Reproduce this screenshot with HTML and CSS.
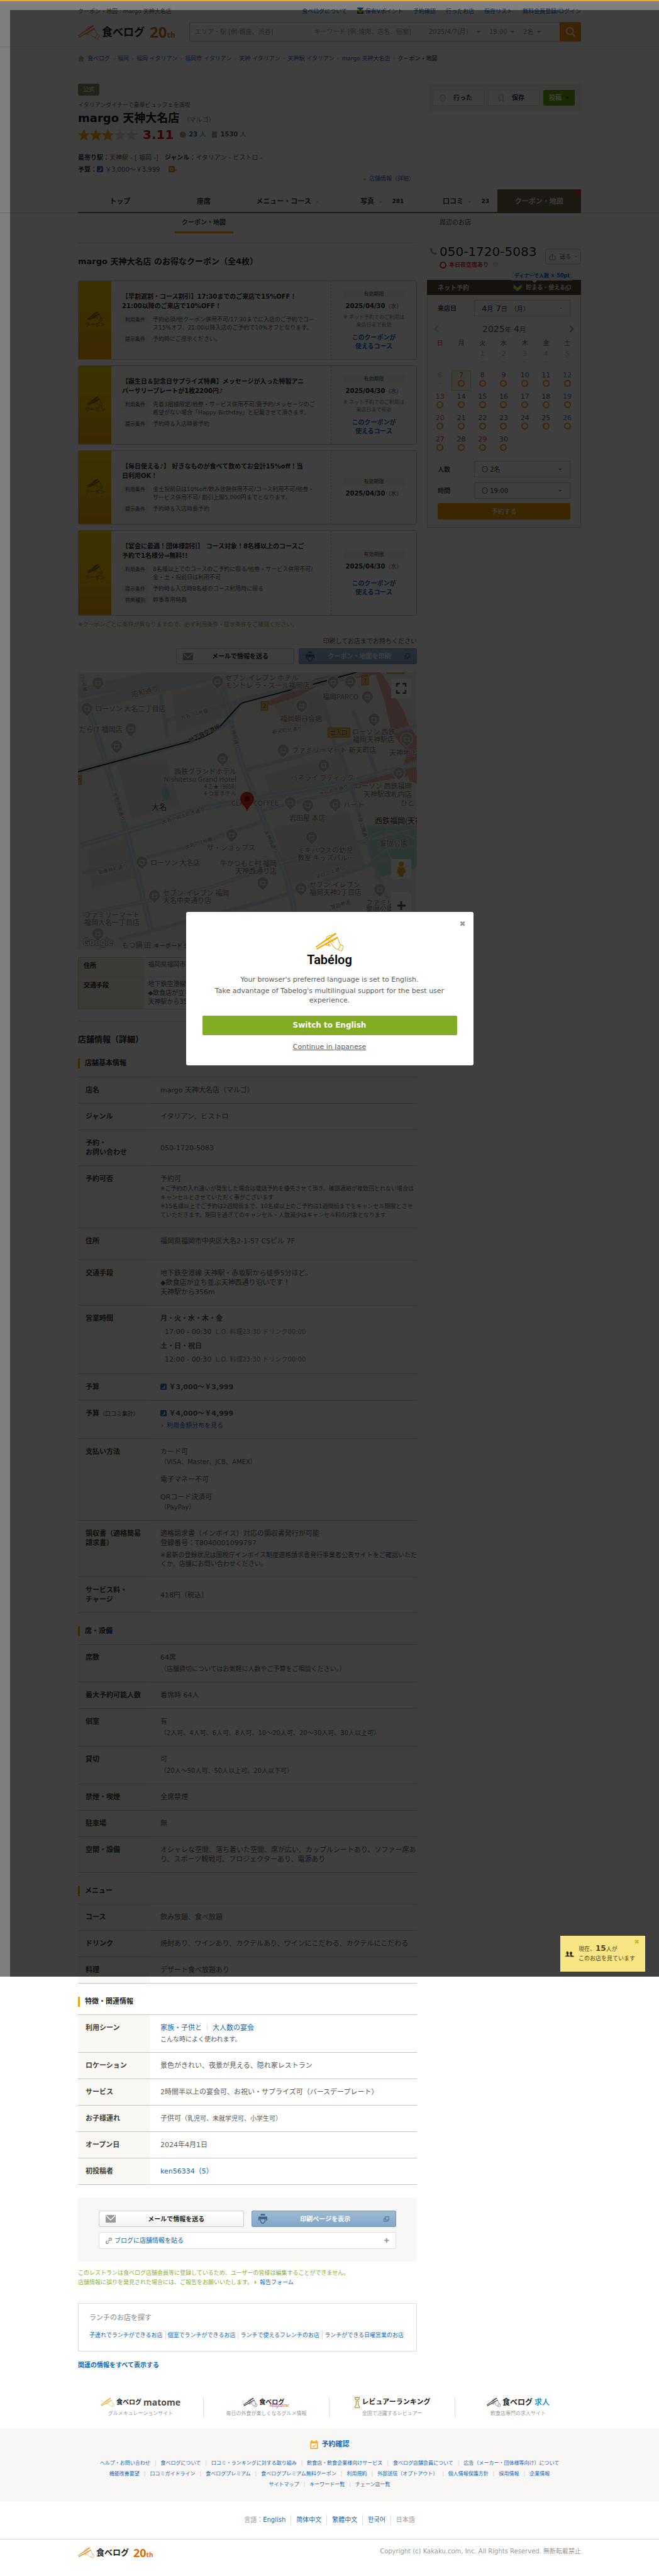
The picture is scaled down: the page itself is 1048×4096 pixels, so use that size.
FILE: index.html
```html
<!DOCTYPE html>
<html lang="ja">
<head>
<meta charset="utf-8">
<meta name="viewport" content="width=device-width, initial-scale=1">
<title>クーポン・地図 : margo 天神大名店 - 食べログ</title>
<link rel="stylesheet" href="styles.css">
</head>
<body>
<svg class="sprite" aria-hidden="true">
  <symbol id="hand" viewBox="0 0 56 38">
    <g fill="none" stroke="currentColor" stroke-width="1.3" stroke-linejoin="round" stroke-linecap="round">
      <path d="M21 13c1-4 5-8 10-8l5-1M43 9c3 5 4 10 7 15l5 2c1 3-1 8-3 11-2 0-4-1-7-3-5-2-9-4-11-9-3-5-5-8-9-11"/>
      <path d="M50 24c-1 4-2 7-5 10M25 12c3-1 5 0 7 3l4 5M24 20l-3 5c2 2 5 0 6-3M28 23l-2 3c1 2 4 0 4-1"/>
    </g>
    <path d="M0 28 40 0l2 3L1 30zM1 32l43-24 1 3L3 34z" fill="currentColor"/>
  </symbol>
  <symbol id="mail" viewBox="0 0 16 12"><path fill="#9a9a9a" d="M0 0h16v12H0z"/><path d="m1 1 7 7 7-7" fill="none" stroke="#fff" stroke-width="1.4"/></symbol>
  <symbol id="print" viewBox="0 0 16 18"><path fill="#3d6286" d="M4 0h8v3H4zM0 5h16v7h-2V9H2v3H0z"/><path fill="none" stroke="#3d6286" stroke-width="1.5" d="M4 9h8v5l-3 3H6l-2-3z"/></symbol>
  <symbol id="popup" viewBox="0 0 12 12"><path fill="none" stroke="currentColor" stroke-width="1.4" d="M4 1h7v7H4zM4 4H1v7h7V8"/></symbol>
  <symbol id="vpoint" viewBox="0 0 14 14"><path fill="#0b62a8" d="M0 0h14v14H0z"/><path fill="#f2e300" d="M0 1v6l7 6 7-6V1L7 7z"/></symbol>
  <symbol id="moon" viewBox="0 0 12 12"><rect width="12" height="12" rx="2" fill="#2a72ac"/><path fill="#fff" d="M7 2c3 2 3 7-2 8-1 0-2 0-3-1 4 0 6-3 5-7"/></symbol>
  <symbol id="sun" viewBox="0 0 12 12"><rect width="12" height="12" rx="2" fill="#d98a2b"/><circle cx="6" cy="6" r="2.5" fill="none" stroke="#fff" stroke-width="1.4"/></symbol>
  <symbol id="star" viewBox="0 0 20 20"><path d="m10 0 3 7 7 .6-5.300 4.600L16.300 20 10 15.600 3.700 20l1.600-7.800L0 7.600 7 7z" fill="currentColor"/></symbol>
  <symbol id="pin" viewBox="-30 -30 60 70"><path d="M0 36C-3 24-26 20-26-2a26 26 0 0 1 52 0C26 20 3 24 0 36" fill="#b4b4b0" stroke="#f4f2ee" stroke-width="4"/><path d="M-9-8H9V8H-9z" fill="none" stroke="#eee" stroke-width="4"/></symbol>
</svg>

<header class="site-head">
  <div class="wrap utility">
    <p>クーポン・地図 : margo 天神大名店</p>
    <nav aria-label="ユーティリティ">
      <a href="#">食べログについて</a>
      <a href="#"><svg class="ico12"><use href="#vpoint"/></svg> 保有Vポイント</a>
      <a href="#">予約確認</a>
      <a href="#">行ったお店</a>
      <a href="#">保存リスト</a>
      <a href="#">無料会員登録/ログイン</a>
    </nav>
  </div>
  <div class="wrap masthead">
    <a class="logo" href="#"><svg class="logo-mark"><use href="#hand"/></svg><span class="logo-name">食べログ</span><span class="logo-20">20<small>th</small></span></a>
    <form class="search">
      <input class="area" type="text" aria-label="エリア・駅" placeholder="エリア・駅 [例:銀座、渋谷]">
      <input class="word" type="text" aria-label="キーワード" placeholder="キーワード [例:焼肉、店名、個室]">
      <span class="pick"><select aria-label="日付" class="w-date"><option>2025/4/7(月)</option></select></span>
      <span class="pick"><select aria-label="時間" class="w-time"><option>19:00</option></select></span>
      <span class="pick"><select aria-label="人数" class="w-num"><option>2名</option></select></span>
      <button type="submit" aria-label="検索"><svg viewBox="0 0 20 20"><circle cx="9" cy="8" r="6"/><path d="m13 12 5 6"/></svg></button>
    </form>
  </div>
</header>

<nav class="wrap crumbs" aria-label="パンくず">
  <svg viewBox="0 0 12 12"><path d="m6 0 6 6h-2v6H7V8H5v4H2V6H0z"/></svg>
  <a href="#">食べログ</a><i>›</i><a href="#">福岡</a><i>›</i><a href="#">福岡 イタリアン</a><i>›</i><a href="#">福岡市 イタリアン</a><i>›</i><a href="#">天神 イタリアン</a><i>›</i><a href="#">天神駅 イタリアン</a><i>›</i><a href="#">margo 天神大名店</a><i>›</i><b>クーポン・地図</b>
</nav>

<div class="wrap shop">
  <div class="shop-id">
    <span class="official">公式</span>
    <p class="catch">イタリアンダイナーで豪華ビュッフェを満喫</p>
    <h1>margo 天神大名店 <small>（マルゴ）</small></h1>
    <div class="score">
      <svg class="on"><use href="#star"/></svg><svg class="on"><use href="#star"/></svg><svg class="on"><use href="#star"/></svg><svg class="off"><use href="#star"/></svg><svg class="off"><use href="#star"/></svg>
      <strong>3.11</strong>
      <span class="bubble"></span><a href="#"><b>23</b> 人</a><span class="mark"></span><span><b>1530</b> 人</span>
    </div>
    <p class="facts gap-l"><b>最寄り駅：</b>天神駅 - [ 福岡 -]　<b>ジャンル：</b>イタリアン - ビストロ -</p>
    <p class="facts gap-s"><b>予算：</b><svg class="ico12"><use href="#moon"/></svg> ￥3,000～￥3,999 　<svg class="ico12"><use href="#sun"/></svg>-</p>
    <p class="detail"><i></i><a href="#detail">店舗情報（詳細）</a></p>
  </div>
  <div class="actions">
    <button type="button"><svg viewBox="0 0 12 14"><path d="M6 1c2 0 5 1 5 5 0 3-2 5-5 7-3-2-5-4-5-7 0-4 3-5 5-5M4 6l2 2 3-3"/></svg>行った</button>
    <button type="button"><svg viewBox="0 0 12 14"><path d="M2 1h8v12l-4-3-4 3z"/></svg>保存</button>
    <button type="button" class="post">投稿<i></i></button>
  </div>
</div>

<div class="tabs">
  <nav class="wrap" aria-label="店舗メニュー">
    <a href="#">トップ</a><a href="#">座席</a><a href="#">メニュー・コース<i>-</i></a><a href="#" class="counted">写真<i>-</i><em>281</em></a><a href="#" class="counted">口コミ<i>-</i><em>23</em></a><a href="#" class="here">クーポン・地図</a>
  </nav>
</div>
<nav class="wrap subtabs" aria-label="クーポン・地図"><a href="#" class="here">クーポン・地図</a><a href="#">周辺のお店</a></nav>

<div class="wrap columns">
<main>
  <h2 class="lead">margo 天神大名店 のお得なクーポン（全4枚）</h2>

  <ul class="coupons">
    <li>
      <div class="strip"><svg><use href="#hand"/></svg>クーポン</div>
      <div class="offer">
        <h3>【早割遅割・コース割引】17:30までのご来店で15%OFF！<br>21:00以降のご来店で10%OFF！</h3>
        <dl><dt>利用条件</dt><dd>予約必須/他クーポン併用不可/17:30までに入店のご予約でコー<br>ス15%オフ、21:00以降入店のご予約で10%オフとなります。</dd><dt>提示条件</dt><dd>予約時にご提示ください。</dd></dl>
      </div>
      <div class="limit"><span>有効期限</span><p><b>2025/04/30</b>（水）</p><small>※ ネット予約でのご利用は<br>来店日まで有効</small><a href="#">このクーポンが<br>使えるコース</a></div>
    </li>
    <li>
      <div class="strip"><svg><use href="#hand"/></svg>クーポン</div>
      <div class="offer">
        <h3>【誕生日＆記念日サプライズ特典】メッセージが入った特製アニ<br>バーサリープレートが1枚2200円♪</h3>
        <dl><dt>利用条件</dt><dd>先着3組様限定/他券・サービス併用不可/要予約/メッセージのご<br>希望がない場合「Happy Birthday」と記載させて頂きます。</dd><dt>提示条件</dt><dd>予約時＆入店時要予約</dd></dl>
      </div>
      <div class="limit"><span>有効期限</span><p><b>2025/04/30</b>（水）</p><small>※ ネット予約でのご利用は<br>来店日まで有効</small><a href="#">このクーポンが<br>使えるコース</a></div>
    </li>
    <li>
      <div class="strip"><svg><use href="#hand"/></svg>クーポン</div>
      <div class="offer">
        <h3>【毎日使える♪】 好きなものが食べて飲めてお会計15%off！当<br>日利用OK！</h3>
        <dl><dt>利用条件</dt><dd>金土祝前日は10%off/飲み放題併用不可/コース利用不可/他券・<br>サービス併用不可/ 割引上限5,000円までとなります。</dd><dt>提示条件</dt><dd>予約時＆入店時要予約</dd></dl>
      </div>
      <div class="limit"><span>有効期限</span><p><b>2025/04/30</b>（水）</p></div>
    </li>
    <li>
      <div class="strip"><svg><use href="#hand"/></svg>クーポン</div>
      <div class="offer">
        <h3>【宴会に最適！団体様割引】 コース対象！8名様以上のコースご<br>予約で1名様分⇒無料!!</h3>
        <dl><dt>利用条件</dt><dd>8名様以上でのコースのご予約に限る/他券・サービス併用不可/<br>金・土・祝前日は利用不可</dd><dt>提示条件</dt><dd>予約時＆入店時8名様のコース利用時に限る</dd><dt>特典種別</dt><dd>幹事専用特典</dd></dl>
      </div>
      <div class="limit"><span>有効期限</span><p><b>2025/04/30</b>（水）</p><a href="#">このクーポンが<br>使えるコース</a></div>
    </li>
  </ul>
  <p class="green-note">※クーポンごとに条件が異なりますので、必ず利用条件・提示条件をご確認ください。</p>

  <p class="print-note">印刷してお店までお持ちください</p>
  <div class="send">
    <button type="button" class="btn-mail"><svg><use href="#mail"/></svg><span>メールで情報を送る</span></button>
    <button type="button" class="btn-print"><svg><use href="#print"/></svg><span>クーポン・地図を印刷</span><svg class="pop"><use href="#popup"/></svg></button>
  </div>

  <svg class="map" viewBox="0 0 539 441" role="img" aria-label="margo 天神大名店 周辺の地図">
    <rect width="539" height="441" fill="#ebe8e0"/>
    <g transform="scale(.3643 .3538) translate(-49 -161)">
      <g fill="#e2dfd7"><path d="M215 560h220l60 200-210 60zM860 620l330-90 60 130-350 90zM900 860l330-70 80 260-330 60zM460 260l230-60 40 150-250 80zM90 960l180-50 60 170-220 50zM900 300l200-60 60 130-200 60z"/></g>
      <path d="M49 270 700 165l-260-4L49 240z" fill="#d2d9de"/>
      <path d="M49 320 640 170M49 255 560 140" stroke="#d2d9de" stroke-width="50" fill="none"/>
      <path d="M1080 190 1240 161h130c40 50 60 110 100 170l20 60 38 60v210l-30-10-30-70 20-60-70-90-30-140-40-120-290 60z" fill="#e6a8a8"/>
      <path d="M1225 655 1500 580v45l-260 50zM860 300l230-110 10 30-90 50-120 40z" fill="#e6a8a8"/>
      <path d="M1310 850h218v190l-180 45z" fill="#b3dcc6"/>
      <path d="M1320 900q90-60 200 10M1400 860q-30 100 60 200M1340 1000q90-90 190-50" fill="none" stroke="#d7eedf" stroke-width="4"/>
      <path d="M411 685l30-8 12 52-31 10z" fill="#9adadb"/>
      <g fill="none" stroke="#cdd8db" stroke-width="26"><path d="M49 608 540 470 690 395 760 290 1290 161M680 235 760 560 850 800 960 1080 1000 1260M90 300 180 600 260 870 370 1330M60 940 600 770 1250 650 1528 570"/></g>
      <g fill="none" stroke="#cdd8db" stroke-width="17"><path d="M780 600 1528 400M70 1060 520 950 860 830M70 1250 620 1130 960 1010 1528 860M230 1360 900 1180 1400 1000M1190 500 1350 1050 1400 1180M1130 330 1180 520M1250 330l100 280M420 380 1528 90M860 780l400-100M410 260l30 190"/></g>
      <g fill="none" stroke="#f0efea" stroke-width="3"><path d="M60 940 600 770 1250 650 1528 570M90 300 180 600 260 870 370 1330M680 235 760 560 850 800 960 1080 1000 1260M70 1250 620 1130 960 1010 1528 860"/></g>
      <path d="M49 608 560 465Q640 440 680 392L745 318Q760 300 775 296L985 238M1075 215l190-54" fill="none" stroke="#111" stroke-width="5"/>
      <g fill="#edbd3c" stroke="#a07a10" stroke-width="2"><path d="M1140 411h96v42h-96zM1288 177h30v41h-30zM848 292h30v41h-30zM40 624h25v42H40zM1398 150h74v16h-74z"/></g>
      <g>
        <use href="#pin" x="106" y="180" width="60" height="70"/><use href="#pin" x="628" y="173" width="60" height="70"/><use href="#pin" x="1133" y="175" width="60" height="70"/><use href="#pin" x="1208" y="173" width="60" height="70"/><use href="#pin" x="58" y="295" width="60" height="70"/><use href="#pin" x="1283" y="242" width="60" height="70"/><use href="#pin" x="996" y="282" width="60" height="70"/><use href="#pin" x="250" y="387" width="60" height="70"/><use href="#pin" x="1311" y="343" width="60" height="70"/><use href="#pin" x="188" y="464" width="60" height="70"/><use href="#pin" x="915" y="482" width="60" height="70"/><use href="#pin" x="1454" y="432" width="60" height="70"/><use href="#pin" x="650" y="520" width="60" height="70"/><use href="#pin" x="1092" y="550" width="60" height="70"/><use href="#pin" x="1420" y="584" width="60" height="70"/><use href="#pin" x="946" y="717" width="60" height="70"/><use href="#pin" x="1022" y="730" width="60" height="70"/><use href="#pin" x="1142" y="725" width="60" height="70"/><use href="#pin" x="690" y="862" width="60" height="70"/><use href="#pin" x="1039" y="873" width="60" height="70"/><use href="#pin" x="298" y="985" width="60" height="70"/><use href="#pin" x="826" y="1078" width="60" height="70"/><use href="#pin" x="993" y="1104" width="60" height="70"/><use href="#pin" x="353" y="1136" width="60" height="70"/><use href="#pin" x="1336" y="1108" width="60" height="70"/><use href="#pin" x="106" y="1307" width="60" height="70"/>
      </g>
    </g>
    <g class="poi">
      <text x="234" y="13">セブン-イレブン ホテル</text><text x="234" y="25">モントレ ラ・スール福岡店</text>
      <text x="27" y="62">ローソン 大名二丁目店</text><text x="2" y="95">だらけ 福岡店</text>
      <text x="389" y="43">福岡PARCO</text><text x="322" y="78">福岡朝日会館</text>
      <text x="436" y="99">ローソン 西鉄</text><text x="437" y="111">福岡天神駅店</text>
      <text x="340" y="128">ファミリーマート 新天町店</text><text x="495" y="132">天神地下</text>
      <text x="252" y="162" text-anchor="end">西鉄グランドホテル</text><text x="252" y="174" text-anchor="end">Nishitetsu Grand Hotel</text>
      <text class="s" x="252" y="185" text-anchor="end">4.2 ★ (3658)</text><text class="s" x="252" y="196" text-anchor="end">4 つ星ホテル</text>
      <text x="338" y="172">パネライ ブティック</text><text x="244" y="212">CLASS COFFEE</text><text x="422" y="215">ハート</text>
      <text x="440" y="185">ローソン 西鉄福岡</text><text x="454" y="198">天神駅改札内店</text><text x="513" y="212">ひと</text>
      <text x="336" y="236">岩田屋 本店</text><text x="205" y="283">ザ・ショップス</text>
      <text x="349" y="287">ミキハウスの幼児</text><text x="349" y="299">教室 キッズパル…</text><text x="480" y="276">警固公園</text>
      <text x="115" y="307">ローソン 大名店</text><text x="316" y="308" text-anchor="end">牛かつもと村 福岡</text><text x="316" y="320" text-anchor="end">天神西通り店</text>
      <text x="368" y="342">セブン-イレブン</text><text x="368" y="354">福岡天神2丁目店</text>
      <text x="135" y="355">セブン-イレブン 福岡</text><text x="135" y="367">大名中央通り店</text>
      <text x="458" y="370">ファミリ</text><text x="458" y="381">警固公園</text>
      <text x="10" y="390">ファミリーマート</text><text x="10" y="402">福岡大名一丁目店</text><text x="70" y="438">もつ鍋 田</text>
    </g>
    <g class="road">
      <text transform="translate(86 40) rotate(-14)" class="m">昭和通り</text><text transform="translate(164 75) rotate(-15)">大名765号線</text>
      <text transform="translate(309 98) rotate(-7)">新天町北通り</text><text transform="translate(242 84) rotate(76)">天神西通り</text>
      <text transform="translate(384 197) rotate(-16)">きらめき通り</text><text transform="translate(134 241) rotate(-17)">大名小前えのき通り</text>
      <text transform="translate(56 191) rotate(74)">大名中央通り</text><text transform="translate(171 281) rotate(-17)">大名757号線</text>
      <text transform="translate(296 253) rotate(64)">天神西通り</text><text transform="translate(33 321) rotate(-13)">新雁林町通り</text>
      <text transform="translate(379 328) rotate(-18)">マロニエ通り</text><text transform="translate(403 377) rotate(-17)">警固参道</text><text transform="translate(443 224) rotate(73)">今泉公園通り</text>
      <text transform="translate(3 3) rotate(78)">774号線</text>
    </g>
    <g class="major"><text transform="translate(178 112) rotate(-26)" class="s">地下鉄空港線</text><text x="117" y="219">大名</text><text x="472" y="241">西鉄福岡(天神</text><text class="s" x="121" y="438">キーボード ショートカット</text><text class="s" x="401" y="99">出入口</text><text class="s" x="454" y="17">7</text><text class="s" x="294" y="57">2</text><text class="s" x="0" y="175">5</text></g>
    <text class="google" x="8" y="434">Google</text>
    <path d="M269 222c-1-9-11-12-11-21a11 11 0 0 1 22 0c0 9-10 12-11 21z" fill="#e32b22"/><circle cx="269" cy="201" r="4" fill="#8e1212"/>
    <g fill="#fff"><rect x="498" y="10" width="32" height="31"/><rect x="498" y="297" width="32" height="32"/><rect x="498" y="350" width="32" height="64"/></g>
    <path d="M507 23v-5h5M516 18h5v5M521 28v5h-5M512 33h-5v-5" fill="none" stroke="#555" stroke-width="2.500"/>
    <path d="M508 371h13M514 364v14" stroke="#555" stroke-width="3"/>
    <circle cx="514" cy="305" r="4" fill="#e8a820"/><path d="M509 310h10l2 9-3 1-1 5h-6l-1-5-3-1z" fill="#e8a820"/>
  </svg>

  <table class="brief">
    <tr><th scope="row">住所</th><td>福岡県福岡市中央区大名2-1-57 CSビル 7F</td></tr>
    <tr><th scope="row">交通手段</th><td>地下鉄空港線 天神駅・赤坂駅から徒歩5分ほど。<br>◆飲食店が立ち並ぶ天神西通り沿いです！<br>天神駅から356m</td></tr>
  </table>

  <h2 class="lead" id="detail">店舗情報（詳細）</h2>
  <h3 class="sec first">店舗基本情報</h3>
  <table class="info">
    <tr><th scope="row">店名</th><td>margo 天神大名店（マルゴ）</td></tr>
    <tr><th scope="row">ジャンル</th><td>イタリアン、ビストロ</td></tr>
    <tr class="mid"><th scope="row">予約・<br>お問い合わせ</th><td>050-1720-5083</td></tr>
    <tr><th scope="row">予約可否</th><td>予約可<p class="fine">※ご予約の入れ違いが発生した場合は電話予約を優先させて頂き、確認連絡が複数回とれない場合は<br>キャンセルとさせていただく事がございます<br>※15名様以上でご予約は2週間前まで、10名様以上のご予約は1週間前までをキャンセル期限とさせ<br>ていただきます。期日を過ぎてのキャンセル・人数減少はキャンセル料の対象となります</p></td></tr>
    <tr class="roomy"><th scope="row">住所</th><td>福岡県福岡市中央区大名2-1-57 CSビル 7F</td></tr>
    <tr><th scope="row">交通手段</th><td>地下鉄空港線 天神駅・赤坂駅から徒歩5分ほど。<br>◆飲食店が立ち並ぶ天神西通り沿いです！<br>天神駅から356m</td></tr>
    <tr><th scope="row">営業時間</th><td class="hours"><b>月・火・水・木・金</b><p>17:00 - 00:30 <small>L.O. 料理23:30 ドリンク00:00</small></p><b>土・日・祝日</b><p>12:00 - 00:30 <small>L.O. 料理23:30 ドリンク00:00</small></p></td></tr>
    <tr><th scope="row">予算</th><td><svg class="ico12"><use href="#moon"/></svg> <b>￥3,000～￥3,999</b></td></tr>
    <tr><th scope="row">予算<small>（口コミ集計）</small></th><td><svg class="ico12"><use href="#moon"/></svg> <b>￥4,000～￥4,999</b><p class="more"><i class="tri"></i><a href="#">利用金額分布を見る</a></p></td></tr>
    <tr><th scope="row">支払い方法</th><td>カード可<p class="sub">（VISA、Master、JCB、AMEX）</p><p class="para">電子マネー不可</p><p class="para">QRコード決済可</p><p class="sub">（PayPay）</p></td></tr>
    <tr><th scope="row">領収書（適格簡易<br>請求書）</th><td>適格請求書（インボイス）対応の領収書発行が可能<br>登録番号：T8040001099797<p class="invoice">※最新の登録状況は国税庁インボイス制度適格請求書発行事業者公表サイトをご確認いただ<br>くか、店舗にお問い合わせください。</p></td></tr>
    <tr class="mid"><th scope="row">サービス料・<br>チャージ</th><td>418円（税込）</td></tr>
  </table>

  <h3 class="sec">席・設備</h3>
  <table class="info">
    <tr><th scope="row">席数</th><td>64席<p class="line2">（店舗貸切についてはお気軽に人数やご予算をご相談ください。）</p></td></tr>
    <tr><th scope="row">最大予約可能人数</th><td>着席時 64人</td></tr>
    <tr><th scope="row">個室</th><td>有<p class="line2">（2人可、4人可、6人可、8人可、10～20人可、20～30人可、30人以上可）</p></td></tr>
    <tr><th scope="row">貸切</th><td>可<p class="line2">（20人～50人可、50人以上可、20人以下可）</p></td></tr>
    <tr><th scope="row">禁煙・喫煙</th><td>全席禁煙</td></tr>
    <tr><th scope="row">駐車場</th><td>無</td></tr>
    <tr><th scope="row">空間・設備</th><td>オシャレな空間、落ち着いた空間、席が広い、カップルシートあり、ソファー席あ<br>り、スポーツ観戦可、プロジェクターあり、電源あり</td></tr>
  </table>

  <h3 class="sec">メニュー</h3>
  <table class="info">
    <tr><th scope="row">コース</th><td>飲み放題、食べ放題</td></tr>
    <tr><th scope="row">ドリンク</th><td>焼酎あり、ワインあり、カクテルあり、ワインにこだわる、カクテルにこだわる</td></tr>
    <tr><th scope="row">料理</th><td>デザート食べ放題あり</td></tr>
  </table>

  <h3 class="sec">特徴・関連情報</h3>
  <table class="info">
    <tr><th scope="row">利用シーン</th><td><a href="#">家族・子供と</a><span class="bar">｜</span><a href="#">大人数の宴会</a><p class="line2">こんな時によく使われます。</p></td></tr>
    <tr><th scope="row">ロケーション</th><td>景色がきれい、夜景が見える、隠れ家レストラン</td></tr>
    <tr><th scope="row">サービス</th><td>2時間半以上の宴会可、お祝い・サプライズ可（バースデープレート）</td></tr>
    <tr><th scope="row">お子様連れ</th><td>子供可<small>（乳児可、未就学児可、小学生可）</small></td></tr>
    <tr><th scope="row">オープン日</th><td>2024年4月1日</td></tr>
    <tr><th scope="row">初投稿者</th><td><a href="#">ken56334（5）</a></td></tr>
  </table>

  <div class="share">
    <button type="button" class="btn-mail"><svg><use href="#mail"/></svg><span>メールで情報を送る</span></button>
    <button type="button" class="btn-print"><svg><use href="#print"/></svg><span>印刷ページを表示</span><svg class="pop"><use href="#popup"/></svg></button>
    <button type="button" class="blog"><svg viewBox="0 0 12 12"><path d="M5 7 8 4M6 3l2-2c2-1 4 1 3 3L9 6M6 9l-2 2c-2 1-4-1-3-3l2-2"/></svg><span>ブログに店舗情報を貼る</span><i>✚</i></button>
  </div>
  <p class="green-note report">このレストランは食べログ店舗会員等に登録しているため、ユーザーの皆様は編集することができません。<br>店舗情報に誤りを発見された場合には、ご報告をお願いいたします。 <i class="tri"></i><a href="#">報告フォーム</a></p>

  <section class="lunch">
    <h3>ランチのお店を探す</h3>
    <ul><li><a href="#">子連れでランチができるお店</a></li><li><a href="#">個室でランチができるお店</a></li><li><a href="#">ランチで使えるフレンチのお店</a></li><li><a href="#">ランチができる日曜営業のお店</a></li></ul>
  </section>
  <p class="related"><a href="#">関連の情報をすべて表示する</a></p>
</main>

<aside>
  <div class="tel">
    <svg class="phone" viewBox="0 0 12 12"><path d="M1 1l2-1 2 3-1 2 3 3 2-1 3 2-1 2C6 12 0 6 1 1"/></svg>
    <div><p class="num">050-1720-5083</p><p class="vacant"><i></i>本日夜空席あり<svg viewBox="0 0 10 10"><path d="M1 1h8v6H5L3 9V7H1zM3 3h4M3 5h4"/></svg></p></div>
    <button type="button"><svg viewBox="0 0 14 14"><path d="M4 6H1v7h12V6h-3M7 10V1M4 4l3-3 3 3"/></svg>送る<i></i></button>
  </div>
  <p class="tip"><span>ディナーで人数 × 50pt</span></p>
  <form class="reserve">
    <h2>ネット予約<a href="#"><svg><use href="#vpoint"/></svg>貯まる・使える<svg class="pop"><use href="#popup"/></svg></a></h2>
    <div class="field"><label for="day">来店日</label><button type="button" id="day" class="day"><span>4<small>月</small> 7<small>日　（月）</small></span><i></i></button></div>
    <p class="month"><button type="button" aria-label="前の月" class="prev"></button><span>2025<small>年</small> 4<small>月</small></span><button type="button" aria-label="次の月" class="next"></button></p>
    <table class="cal">
      <thead><tr><th class="sun">日</th><th>月</th><th>火</th><th>水</th><th>木</th><th>金</th><th class="sat">土</th></tr></thead>
      <tbody>
      <tr class="past"><td></td><td></td><td>1<s>－</s></td><td>2<s>－</s></td><td>3<s>－</s></td><td>4<s>－</s></td><td>5<s>－</s></td></tr>
      <tr><td class="past">6<s>－</s></td><td class="today">7<i></i></td><td>8<i></i></td><td>9<i></i></td><td>10<i></i></td><td>11<i></i></td><td class="sat">12<i></i></td></tr>
      <tr><td class="sun">13<i></i></td><td>14<i></i></td><td>15<i></i></td><td>16<i></i></td><td>17<i></i></td><td>18<i></i></td><td class="sat">19<i></i></td></tr>
      <tr><td class="sun">20<i></i></td><td>21<i></i></td><td>22<i></i></td><td>23<i></i></td><td>24<i></i></td><td>25<i></i></td><td class="sat">26<i></i></td></tr>
      <tr><td class="sun">27<i></i></td><td>28<i></i></td><td class="sun">29<i></i></td><td>30<i></i></td><td></td><td></td><td></td></tr>
      </tbody>
    </table>
    <div class="field"><label for="num">人数</label><span class="pick"><select id="num"><option>〇 2名</option></select></span></div>
    <div class="field"><label for="time">時間</label><span class="pick"><select id="time"><option>〇 19:00</option></select></span></div>
    <button type="submit" class="go">予約する</button>
  </form>
</aside>
</div>

<ul class="wrap services">
  <li><a href="#" class="matome"><svg><use href="#hand"/></svg><b>食べログ</b><em>matome</em></a><p>グルメキュレーションサイト</p></li>
  <li><a href="#" class="mag"><svg><use href="#hand"/></svg><b>食べログ</b><em>Magazine</em></a><p>毎日の外食が楽しくなるグルメ情報</p></li>
  <li><a href="#" class="rank"><svg viewBox="0 0 12 26"><path d="M2 7 1 1l3 2 2-3 2 3 3-2-1 6zM6 9a3 3 0 0 1 2 5l1 6 2 2v3H1v-3l2-2 1-6a3 3 0 0 1 2-5z" fill="none" stroke="#9c8a1e" stroke-width="1.500"/></svg><b>レビュアーランキング</b></a><p>全国で活躍するレビュアー</p></li>
  <li><a href="#" class="job"><svg><use href="#hand"/></svg><b>食べログ</b><em>求人</em></a><p>飲食店専門の求人サイト</p></li>
</ul>

<nav class="foot-links" aria-label="フッター">
  <p class="confirm"><svg viewBox="0 0 14 16"><path d="M0 2h14v14H0z" fill="#e9b03a"/><path d="M3 0v4M11 0v4" stroke="#e9b03a" stroke-width="2"/><path d="M2 6h10v8H2z" fill="#fff"/><path d="m4 10 2 2 4-4" fill="none" stroke="#e9b03a" stroke-width="1.500"/></svg><a href="#">予約確認</a></p>
  <ul><li><a href="#">ヘルプ・お問い合わせ</a></li><li><a href="#">食べログについて</a></li><li><a href="#">口コミ・ランキングに対する取り組み</a></li><li><a href="#">飲食店・飲食企業様向けサービス</a></li><li><a href="#">食べログ店舗会員について</a></li><li><a href="#">広告（メーカー・団体様等向け）について</a></li></ul>
  <ul><li><a href="#">機能改善要望</a></li><li><a href="#">口コミガイドライン</a></li><li><a href="#">食べログプレミアム</a></li><li><a href="#">食べログプレミアム無料クーポン</a></li><li><a href="#">利用規約</a></li><li><a href="#">外部送信（オプトアウト）</a></li><li><a href="#">個人情報保護方針</a></li><li><a href="#">採用情報</a></li><li><a href="#">企業情報</a></li></ul>
  <ul><li><a href="#">サイトマップ</a></li><li><a href="#">キーワード一覧</a></li><li><a href="#">チェーン店一覧</a></li></ul>
</nav>

<ul class="langs"><li class="cap">言語：</li><li><a href="#">English</a></li><li><a href="#" lang="zh-Hans">简体中文</a></li><li><a href="#" lang="zh-Hant">繁體中文</a></li><li><a href="#" lang="ko">한국어</a></li><li>日本語</li></ul>

<footer>
  <div class="wrap">
    <a class="logo small" href="#"><svg class="logo-mark"><use href="#hand"/></svg><span class="logo-name">食べログ</span><span class="logo-20">20<small>th</small></span></a>
    <p>Copyright (c) Kakaku.com, Inc. All Rights Reserved. 無断転載禁止</p>
  </div>
</footer>

<div class="veil"></div>
<div class="veil inner"></div>

<section class="modal" role="dialog" aria-label="Language">
  <button type="button" class="close" aria-label="Close">✖</button>
  <svg class="modal-mark"><use href="#hand"/></svg>
  <p class="wordmark">Tabélog</p>
  <p>Your browser's preferred language is set to English.</p>
  <p class="second">Take advantage of Tabelog's multilingual support for the best user<br>experience.</p>
  <button type="button" class="switch">Switch to English</button>
  <a href="#">Continue in Japanese</a>
</section>

<div class="toast">
  <svg viewBox="0 0 18 11"><path d="M8 11c0-3 3-2 3-4-2-2-2-6 1-6s3 4 1 6c0 2 5 1 5 4z"/><path d="M0 11c0-3 4-2 4-4C2 5 2 0 5 0s4 5 2 7c0 2 4 1 4 4z" stroke="#f9e583"/></svg>
  <p>現在、<b>15</b>人が<br>このお店を見ています</p>
  <button type="button" aria-label="閉じる">✖</button>
</div>
</body>
</html>
```
FILE: styles.css
```css
:root {
  --link: #0f66b8;
  --line: #c9c6b8;
  --text: #5a5a5a;
  --gold: #e6a817;
}

* { box-sizing: border-box; }

body {
  position: relative;
  margin: 0;
  border-top: 2px solid #f4a61c;
  background: #fff;
  color: var(--text);
  font: 11px/15px "DejaVu Sans", "Noto Sans CJK JP", sans-serif;
}

h1, h2, h3, p, ul, dl, dd { margin: 0; padding: 0; }
ul { list-style: none; }
a { color: var(--link); text-decoration: none; }
i, em, s { font-style: normal; text-decoration: none; }
small { line-height: 1; }
button, input, select { font: inherit; color: inherit; }
button { padding: 0; border: 0; background: none; }
table { border-collapse: collapse; }

.sprite { position: absolute; width: 0; height: 0; }
.ico12 { width: 10px; height: 10px; vertical-align: -1px; }
.wrap { width: 100%; max-width: 800px; margin: 0 auto; }

/* header */
.site-head { border-bottom: 1px solid #e2e2e2; padding-bottom: 8px; }
.utility { display: flex; justify-content: space-between; padding-top: 9px; font-size: 9px; line-height: 14px; }
.utility nav { display: flex; gap: 16px; }
.masthead { display: flex; justify-content: space-between; align-items: center; margin-top: 10px; }

.logo { display: flex; align-items: center; color: #222; gap: 4px; }
.logo-mark { width: 34px; height: 24px; color: #e2882a; }
.logo-name { font-size: 17px; line-height: 24px; font-weight: 700; }
.logo-20 { margin-left: 4px; color: #e06a0c; font: 700 24px/24px "Open Sans", sans-serif; }
.logo-20 small { font-size: 12px; }
.logo.small { gap: 3px; }
.small .logo-mark { width: 26px; height: 18px; }
.small .logo-name { font-size: 13px; line-height: 18px; }
.small .logo-20 { font-size: 18px; line-height: 18px; }
.small small { font-size: 10px; }

.search { display: flex; width: 623px; height: 31px; border: 1px solid #c4c0b4; border-radius: 2px; font-size: 10px; color: #888; }
.search input { min-width: 0; border: 0; background: none; padding: 0 8px; }
.search input::placeholder { color: #999; }
.search .area { flex: 186 1 0; }
.search .word { flex: 187 1 0; }
.pick { display: flex; align-items: center; }
.pick select { appearance: none; border: 0; background: none; padding: 0; }
.pick::after { content: ""; border: 3px solid transparent; border-top-color: #888; border-bottom: 0; }
.w-date { width: 76px; }
.w-time { width: 34px; }
.w-num { width: 22px; }
.search .pick { margin-right: 14px; }
.search button { width: 34px; margin: -1px -1px -1px 16px; background: #f08d0c; border-radius: 0 2px 2px 0; }
.search button svg { width: 18px; height: 18px; fill: none; stroke: #fff; stroke-width: 2; vertical-align: middle; }

.crumbs { display: flex; align-items: center; padding-top: 11px; font-size: 9px; line-height: 14px; white-space: nowrap; }
.crumbs svg { width: 10px; height: 10px; margin-right: 5px; fill: #a9a593; }
.crumbs i { width: 12px; text-align: center; color: #aaa; }
.crumbs b { color: #444; font-weight: 500; }

/* restaurant heading */
.shop { display: flex; align-items: flex-start; margin-top: 33px; }
.shop-id { width: 539px; }
.official { display: block; width: 34px; line-height: 19px; border-radius: 2px; background: #8f8b6b; color: #fff; font-size: 9px; text-align: center; }
.catch { margin-top: 8px; font-size: 9px; line-height: 14px; }
h1 { margin-top: 2px; color: #111; font-size: 18px; line-height: 24px; }
h1 small { font-size: 10px; font-weight: 400; color: #777; }
.score { display: flex; align-items: center; margin-top: 4px; font-size: 10px; line-height: 20px; }
.score svg { width: 19px; height: 19px; }
.score .on { color: #f5ab0a; }
.score .off { color: #d8d8d8; }
.score strong { margin: 0 10px 0 8px; color: #d8101c; font-size: 20px; }
.bubble { width: 10px; height: 10px; margin-right: 4px; border-radius: 50%; background: #a9a593; }
.mark { width: 8px; height: 10px; margin: 0 5px 0 10px; background: #a9a593; }
.facts { font-size: 10px; line-height: 14px; }
.facts b { color: #333; }
.gap-l { margin-top: 20px; }
.gap-s { margin-top: 5px; }
.detail { font-size: 9px; line-height: 14px; text-align: right; padding-right: 4px; }
.detail i { display: inline-block; margin-right: 4px; border: 3px solid transparent; border-top-color: #f08d0c; border-bottom: 0; }
.actions { display: flex; gap: 6px; margin-left: auto; padding: 10px 10px 10px 7px; background: #f4f2ec; height: 44px; font-size: 10px; font-weight: 700; color: #333; }
.actions button { display: flex; align-items: center; justify-content: center; gap: 12px; width: 82px; height: 25px; background: #fff; border: 1px solid #ddd; border-radius: 2px; padding-right: 8px; }
.actions svg { width: 10px; height: 12px; fill: none; stroke: #aaa; }
.actions .post { width: 50px; gap: 6px; padding: 0; border: 0; background: #6aa80c; color: #fff; }
.post i { border: 3px solid transparent; border-top-color: #333; border-bottom: 0; }

/* navigation tabs */
.tabs { margin-top: 10px; border-bottom: 1px solid #ccc; }
.tabs nav { display: grid; grid-template-columns: repeat(6, 1fr); margin-bottom: -1px; }
.tabs a { display: flex; align-items: center; justify-content: center; height: 38px; padding-top: 2px; border-bottom: 2px solid #6e6648; color: #333; font-weight: 700; }
.tabs i { margin-left: 8px; color: #aaa; }
.tabs em { margin-left: 16px; font-size: 9px; }
.tabs .counted { padding-left: 34px; }
.tabs .here { background: linear-gradient(45deg, transparent 110px, #d33 110px, #d33 117px, transparent 117px) #6e6648; color: #eee; }
.subtabs { display: grid; grid-template-columns: 1fr 1fr; justify-items: center; font-size: 10px; }
.subtabs a { line-height: 29px; width: 93px; text-align: center; border-bottom: 3px solid transparent; color: #444; }
.subtabs .here { border-color: #f29a10; font-weight: 700; }

/* two columns */
.columns { display: grid; grid-template-columns: minmax(0, 1fr) 245px; gap: 16px; margin-top: 15px; }
.lead { border-top: 1px solid #ddd; padding-top: 19px; color: #222; font-size: 13px; line-height: 20px; }

/* coupons */
.coupons { display: grid; gap: 9px; margin-top: 20px; }
.coupons li { display: grid; grid-template-columns: 52px minmax(0, 1fr) 136px; border: 1px solid var(--line); border-radius: 3px; background: #fff; }
.strip { display: flex; flex-direction: column; align-items: center; justify-content: center; background: linear-gradient(#e8cc00, #eeb800 60%, #f09c00); color: #443; font-size: 8px; line-height: 12px; }
.strip svg { width: 26px; height: 16px; }
.offer { padding: 17px 0 17px 17px; white-space: nowrap; }
.offer h3 { color: #222; font-size: 10px; line-height: 15px; }
.offer dl { display: grid; grid-template-columns: 42px 1fr; column-gap: 7px; row-gap: 5px; margin-top: 8px; font-size: 9px; line-height: 13px; }
.offer dt { align-self: start; background: #f7f6f1; color: #444; font-size: 8px; text-align: center; }
.limit { display: flex; flex-direction: column; justify-content: center; align-items: center; border-left: 1px dashed var(--line); padding: 14px 0 13px; text-align: center; font-size: 9px; line-height: 13px; }
.limit span { width: 98px; background: #f7f6f1; font-size: 8px; color: #444; }
.limit p { margin-top: 5px; line-height: 16px; }
.limit b { color: #222; font-size: 10px; }
.limit small { font-size: 8px; line-height: 12px; margin-top: 4px; color: #777; }
.limit a { margin-top: 7px; font-size: 10px; line-height: 14px; font-weight: 700; }
.limit p + a { margin-top: 12px; }
.green-note { margin-top: 7px; color: #8ab038; font-size: 9px; line-height: 14px; }

/* send buttons and map */
.print-note { margin-top: 13px; font-size: 10px; line-height: 14px; text-align: right; }
.send { display: grid; grid-template-columns: 188px 188px; justify-content: end; gap: 7px; margin-top: 4px; }
.btn-mail, .btn-print { display: flex; align-items: center; height: 25px; padding: 0 10px; border: 1px solid #ccc; border-radius: 2px; background: linear-gradient(#fff, #f3f3f3); color: #222; font-size: 10px; font-weight: 700; }
.btn-mail span, .btn-print span { flex: 1; text-align: center; }
.btn-mail svg { width: 16px; height: 12px; }
.btn-print { border-color: #6f94b8; background: linear-gradient(#9dbad4, #84a6c8); color: #fff; }
.btn-print svg { width: 14px; height: 16px; }
.pop { color: #4a6c8e; }
.btn-print .pop { width: 9px; height: 9px; }
.map { display: block; width: 100%; margin-top: 13px; font-family: "Noto Sans CJK JP", sans-serif; }
.map text { paint-order: stroke; stroke: #f4f2ec; stroke-width: 2px; stroke-linejoin: round; }
.poi { font-size: 11px; fill: #777; }
.map .s { font-size: 9px; }
.road { font-size: 8px; fill: #888; }
.road .m { font-size: 11px; }
.major { font-size: 12px; fill: #333; }
.map .major text { stroke-width: 1px; }
.map .google { font: 500 15px Roboto, sans-serif; fill: #fff; stroke: #999; stroke-width: 2px; }

.brief { width: 100%; margin: 12px 0 18px; font-size: 10px; line-height: 14px; border: 1px solid var(--line); }
.brief th { width: 106px; padding: 6px 8px; background: #ece9df; color: #222; text-align: left; vertical-align: top; border-bottom: 1px solid #ddd; }
.brief td { padding: 4px 5px; vertical-align: top; height: 31px; border-bottom: 1px solid #ddd; }

/* information tables */
.sec { margin: 21px 0 12px; padding-left: 8px; border-left: 3px solid var(--gold); color: #222; font-size: 11px; line-height: 16px; }
.sec.first { margin: 20px 0 13px; }
.info { width: 100%; border-top: 1px solid var(--line); table-layout: fixed; }
.info tr { border-bottom: 1px solid var(--line); }
.info th, .info td { vertical-align: top; text-align: left; padding: 13px 0 13px 12px; }
.info th { width: 114px; background: #f9f8f5; color: #3d3d33; }
.info th small { font-size: 9px; font-weight: 400; }
.info td { padding-left: 17px; white-space: nowrap; }
.info td small { font-size: 10px; }
.info .mid td { vertical-align: middle; }
.info .roomy td, .info .roomy th { padding-bottom: 22px; }
.fine { margin-top: 1px; font-size: 9px; line-height: 14px; }
.sub { margin-top: 1px; font-size: 10px; }
.para { margin-top: 13px; }
.invoice { margin-top: 5px; font-size: 10px; line-height: 14px; }
.line2 { margin-top: 3px; font-size: 10px; }
.more { margin-top: 4px; font-size: 10px; padding-left: 2px; }
.hours p { margin: 6px 0 8px 7px; }
.hours p:last-child { margin-bottom: 2px; }
.hours small { margin-left: 3px; color: #888; }
.bar { margin: 0 3px; color: #bbb; }
.tri { display: inline-block; margin-right: 5px; border: 3px solid transparent; border-left-color: var(--gold); border-right: 0; }

/* share, lunch links */
.share { display: grid; grid-template-columns: 1fr 1fr; gap: 8px 12px; margin-top: 21px; padding: 20px 33px; background: #f8f7f5; }
.share button { height: 26px; }
.share .blog { grid-column: 1 / -1; display: flex; align-items: center; height: 27px; padding: 0 10px; border: 1px solid #ddd; border-radius: 2px; background: #fff; color: var(--link); font-size: 10px; }
.blog svg { width: 10px; height: 10px; margin-right: 4px; fill: none; stroke: #999; stroke-width: 2; }
.blog i { margin-left: auto; color: #999; }
.report { margin-top: 11px; line-height: 15px; }
.lunch { margin-top: 25px; padding: 15px 17px 18px; border: 1px solid #ddd; }
.lunch h3 { color: #999; font-size: 11px; font-weight: 500; line-height: 15px; }
.lunch ul { display: flex; margin-top: 13px; font-size: 9px; line-height: 14px; white-space: nowrap; }
.lunch li + li { margin-left: 4px; padding-left: 3px; border-left: 1px solid #ddd; }
.related { margin-top: 14px; font-size: 10px; font-weight: 700; line-height: 16px; }

/* reservation column */
.tel { display: flex; align-items: flex-start; padding-left: 4px; }
.phone { width: 12px; height: 12px; margin: 8px 4px 0 0; fill: #999; }
.num { color: #222; font-size: 20px; line-height: 28px; }
.vacant { display: flex; align-items: center; color: #e02a20; font-size: 9px; font-weight: 700; line-height: 14px; }
.vacant i { width: 11px; height: 11px; margin-right: 4px; border: 2px solid; border-radius: 50%; }
.vacant svg { width: 8px; height: 8px; margin-left: 7px; fill: none; stroke: #bbb; }
.tel button { display: flex; align-items: center; justify-content: space-between; width: 57px; height: 24px; margin: 10px 0 0 auto; padding: 0 5px; border: 1px solid #ccc; border-radius: 2px; font-size: 9px; }
.tel button svg { width: 11px; height: 11px; fill: none; stroke: #777; }
.tel button i, .day i { border: 2px solid transparent; border-top-color: #888; border-bottom: 0; }
.tip { display: flex; justify-content: flex-end; margin-top: 4px; padding-right: 13px; }
.tip span { position: relative; z-index: 1; padding: 0 5px; border-radius: 2px; background: #eaf1f7; color: var(--link); font-size: 8px; line-height: 14px; font-weight: 700; }
.tip span::after { content: ""; position: absolute; left: 33px; top: 14px; border: 4px solid transparent; border-top-color: #eaf1f7; border-bottom: 0; }
.reserve { border: 1px solid #ccc; border-top: 0; padding-bottom: 12px; margin-top: -1px; }
.reserve h2 { display: flex; justify-content: space-between; align-items: center; height: 24px; margin: 0 -1px; padding: 0 16px 0 17px; background: #554a36; color: #eee; font-size: 10px; }
.reserve h2 a { display: flex; align-items: center; color: #eee; font-size: 9px; }
.reserve h2 svg { width: 14px; height: 13px; margin-right: 6px; }
.reserve h2 .pop { width: 9px; height: 9px; margin: 0; color: #eee; }
.field { display: flex; align-items: center; justify-content: space-between; margin: 8px 16px 0; font-size: 10px; }
.field label { font-weight: 700; color: #444; }
.day, .field .pick { display: flex; align-items: center; justify-content: space-between; width: 153px; height: 26px; padding: 0 12px 0 11px; border: 1px solid #ccc; color: #222; }
.day { font-size: 13px; }
.day small, .month small { font-size: 10px; }
.day i { transform: rotate(180deg); }
.field .pick select { flex: 1; }
.month { display: flex; align-items: center; justify-content: space-between; margin: 11px 12px 0; font-size: 14px; line-height: 18px; }
.month button { width: 8px; height: 8px; border: solid #999; border-width: 2px 2px 0 0; transform: rotate(45deg); }
.month .prev { transform: rotate(225deg); border-color: #ccc; }
.cal { width: 236px; margin: 6px auto 9px 3px; table-layout: fixed; text-align: center; line-height: 14px; }
.cal th { height: 16px; padding: 0; font-size: 10px; font-weight: 400; }
.cal td { height: 34px; padding: 2px 0 0; vertical-align: top; }
.cal td i { display: block; width: 11px; height: 11px; margin: 0 auto; border: 2px solid #f29a10; border-radius: 50%; }
.cal s { display: block; font-size: 8px; line-height: 12px; }
.past { color: #bbb; }
.sun { color: #e04040; }
.sat { color: #2f7fc4; }
.today { background: #f8f6e4; outline: 1px solid #ddd6a0; outline-offset: -2px; }
.go { display: block; width: calc(100% - 32px); height: 26px; margin: 7px 16px 0; border-radius: 2px; background: #f39800; color: #fff; font-size: 10px; font-weight: 500; }

/* related services */
.services { display: grid; grid-template-columns: repeat(4, 1fr); margin-top: 42px; margin-bottom: 17px; }
.services li { display: flex; flex-direction: column; align-items: center; height: 33px; border-right: 1px solid #e2e2e2; }
.services li:last-child { border: 0; }
.services a { display: flex; align-items: center; height: 18px; color: #222; }
.services svg { width: 22px; height: 16px; color: #333; margin-right: 3px; }
.services b { font-size: 10px; line-height: 18px; }
.services em { font-weight: 700; margin-left: 3px; }
.services p { margin-top: 3px; color: #999; font-size: 8px; line-height: 12px; }
.services .matome svg { color: #e9a93a; }
.services .matome em { color: #554a40; font: 700 14px/18px "Open Sans", sans-serif; }
.services .mag em { align-self: flex-end; margin-left: -24px; color: #e03a5a; font: italic 400 8px/8px "Liberation Serif", serif; }
.services .rank svg { width: 10px; height: 18px; }
.services .rank b { font-size: 11px; }
.services .job b { font-size: 12px; }
.job em { color: #1f9ac8; font-size: 12px; }

/* footer */
.foot-links { padding: 18px 0; background: #f8f7f5; text-align: center; }
.confirm { display: flex; align-items: center; justify-content: center; gap: 6px; margin-bottom: 13px; font-weight: 700; line-height: 16px; }
.confirm svg { width: 13px; height: 14px; }
.foot-links ul { display: flex; justify-content: center; font-size: 8px; line-height: 17px; }
.foot-links li + li::before { content: "|"; margin: 0 7px; color: #ccc; }
.langs { display: flex; justify-content: center; padding: 22px 0; font-size: 10px; line-height: 16px; color: #999; }
.langs li + li + li { margin-left: 8px; padding-left: 8px; border-left: 1px solid #ddd; }
.langs a { font-family: "DejaVu Sans", "Noto Sans CJK JP", "Noto Sans CJK KR", sans-serif; }
footer { border-top: 1px solid #ddd; padding: 12px 0 30px; }
footer .wrap { display: flex; justify-content: space-between; align-items: flex-start; }
footer p { color: #999; font-size: 10px; line-height: 14px; }

/* overlays */
.veil { position: absolute; z-index: 5; top: -2px; left: 0; right: 0; height: 3143px; background: rgba(0, 0, 0, .5); }
.veil.inner { top: 14px; left: 16px; height: 3127px; }
.modal { position: absolute; z-index: 6; top: 1448px; left: 0; right: 0; width: 457px; margin: 0 auto; padding: 33px 26px 22px; border-radius: 3px; background: #fff; text-align: center; }
.modal-mark { display: block; width: 46px; height: 30px; margin: 0 auto; color: #f5a70c; }
.modal .wordmark { margin-bottom: 11px; color: #000; font: 600 20px/26px Roboto, sans-serif; }
.modal .second { margin-top: 3px; }
.modal .switch { display: block; width: 100%; height: 31px; margin: 17px 0 11px; border-radius: 2px; background: #82ac23; color: #fff; font-size: 12px; font-weight: 700; }
.modal a { color: #5a5a5a; text-decoration: underline; }
.modal .close { position: absolute; top: 12px; right: 12px; color: #999; font-size: 12px; }
.toast { position: absolute; z-index: 6; top: 3076px; right: 22px; display: flex; align-items: center; width: 135px; height: 57px; padding: 0 7px; background: #f9e583; color: #4a431c; font-size: 9px; }
.toast svg { width: 15px; height: 10px; margin-right: 7px; fill: #333018; }
.toast b { font-size: 12px; }
.toast button { position: absolute; top: 5px; right: 9px; color: #cdb82c; font-size: 10px; line-height: 10px; }
```
